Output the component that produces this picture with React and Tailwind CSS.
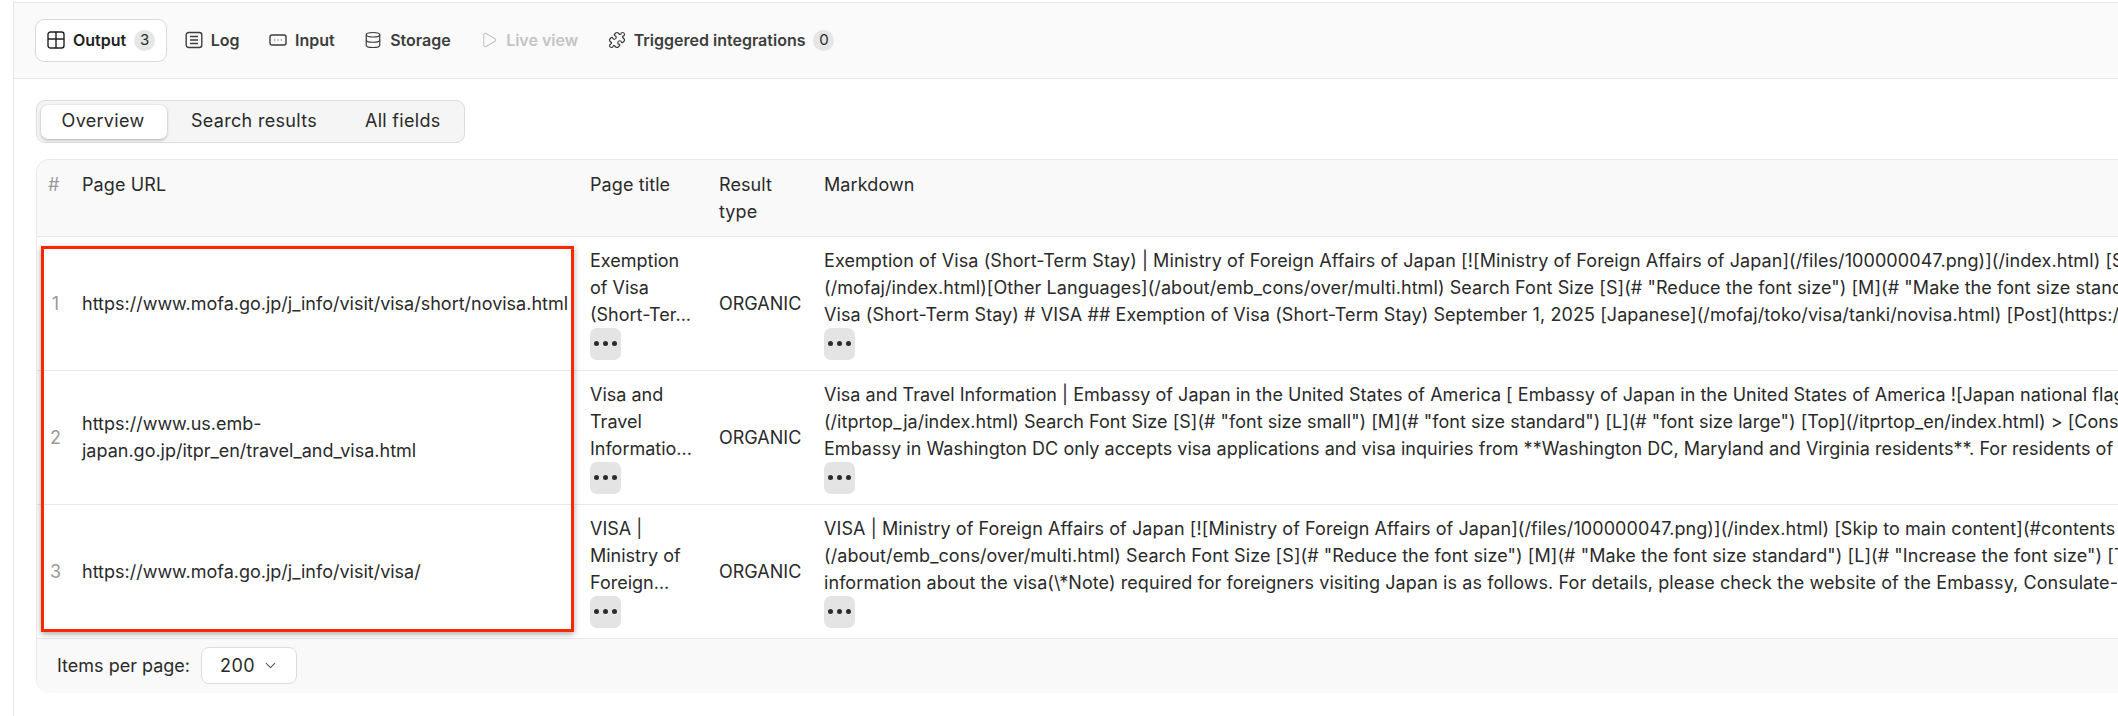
import React from 'react'
import { ChevronDown, Database, Play, Puzzle } from 'lucide-react'

const rows = [
    {
        id: 1,
        url: 'https://www.mofa.go.jp/j_info/visit/visa/short/novisa.html',
        title: ['Exemption', 'of Visa', '(Short-Ter...'],
        tracking: 'tracking-[0.08px]',
        markdown: [
            'Exemption of Visa (Short-Term Stay) | Ministry of Foreign Affairs of Japan [![Ministry of Foreign Affairs of Japan](/files/100000047.png)](/index.html) [Skip to main content](#contents',
            '(/mofaj/index.html)[Other Languages](/about/emb_cons/over/multi.html) Search Font Size [S](# "Reduce the font size") [M](# "Make the font size standard") [L]',
            'Visa (Short-Term Stay) # VISA ## Exemption of Visa (Short-Term Stay) September 1, 2025 [Japanese](/mofaj/toko/visa/tanki/novisa.html) [Post](https://twitter.com',
        ],
    },
    {
        id: 2,
        url: 'https://www.us.emb-japan.go.jp/itpr_en/travel_and_visa.html',
        title: ['Visa and', 'Travel', 'Informatio...'],
        tracking: 'tracking-[0.03px]',
        markdown: [
            'Visa and Travel Information | Embassy of Japan in the United States of America [ Embassy of Japan in the United States of America ![Japan national flag',
            '(/itprtop_ja/index.html) Search Font Size [S](# "font size small") [M](# "font size standard") [L](# "font size large") [Top](/itprtop_en/index.html) > [Consular',
            'Embassy in Washington DC only accepts visa applications and visa inquiries from **Washington DC, Maryland and Virginia residents**. For residents of other',
        ],
    },
    {
        id: 3,
        url: 'https://www.mofa.go.jp/j_info/visit/visa/',
        title: ['VISA |', 'Ministry of', 'Foreign...'],
        tracking: 'tracking-[0.08px]',
        markdown: [
            'VISA | Ministry of Foreign Affairs of Japan [![Ministry of Foreign Affairs of Japan](/files/100000047.png)](/index.html) [Skip to main content](#contents',
            '(/about/emb_cons/over/multi.html) Search Font Size [S](# "Reduce the font size") [M](# "Make the font size standard") [L](# "Increase the font size") [Top]',
            'information about the visa(\\*Note) required for foreigners visiting Japan is as follows. For details, please check the website of the Embassy, Consulate-General',
        ],
    },
]

function MoreButton() {
    return (
        <div className="flex h-[32px] w-[31px] items-center justify-center gap-[4px] rounded-[7px] bg-[#e4e4e4]">
            <span className="h-[5px] w-[5px] rounded-full bg-[#2b2b2b]" />
            <span className="h-[5px] w-[5px] rounded-full bg-[#2b2b2b]" />
            <span className="h-[5px] w-[5px] rounded-full bg-[#2b2b2b]" />
        </div>
    )
}

function GridIcon() {
    return (
        <svg width="18" height="18" viewBox="0 0 18 18" fill="none" stroke="currentColor" strokeWidth="1.4">
            <rect x="1" y="1" width="16" height="16" rx="2.5" />
            <path d="M1 8h16M9 1v16" />
        </svg>
    )
}

function LogIcon() {
    return (
        <svg width="18" height="18" viewBox="0 0 18 18" fill="none" stroke="currentColor" strokeWidth="1.4">
            <rect x="1.2" y="1.5" width="15.6" height="15" rx="2.5" />
            <path d="M5 5.5h8M5 9h8M5 12.5h8" />
        </svg>
    )
}

function InputIcon() {
    return (
        <svg width="18" height="18" viewBox="0 0 18 18" fill="none" stroke="currentColor" strokeWidth="1.4">
            <rect x="1" y="4" width="16" height="10" rx="2" />
            <path d="M5.5 9h.6M8.7 9h.6M11.9 9h.6" strokeWidth="1.5" />
        </svg>
    )
}

function Tab({ icon, label, count, active, disabled }) {
    return (
        <div
            className={`flex h-[43px] items-center gap-[8px] rounded-[9px] border px-[11px] text-[16px] font-semibold ${
                active ? 'border-[#d9d9d9] bg-white text-[#1f1f1f]' : 'border-transparent'
            } ${disabled ? 'text-[#c4c4c4]' : active ? '' : 'text-[#3d3d3d]'}`}
        >
            {icon}
            <span>{label}</span>
            {count !== undefined && (
                <span className="flex h-[21px] w-[21px] items-center justify-center rounded-full bg-[#e6e6e6] text-[15px] font-normal text-[#2b2b2b]">
                    {count}
                </span>
            )}
        </div>
    )
}

function App() {
    return (
        <div className="h-[716px] w-[2118px] overflow-hidden bg-white font-['Inter',sans-serif] text-[#2a2a2a]">
            <div className="ml-[13px] mt-[2px] h-[714px] border-l border-t border-[#e8e8e8]">
                {/* Tabs */}
                <div className="flex h-[76px] items-center gap-[5.5px] border-b border-[#e8e8e8] bg-[#fafafa] pl-[21px] pb-[1px]">
                    <Tab active icon={<GridIcon />} label="Output" count={3} />
                    <Tab icon={<LogIcon />} label="Log" />
                    <Tab icon={<InputIcon />} label="Input" />
                    <Tab icon={<Database size={18} strokeWidth={1.6} />} label="Storage" />
                    <Tab disabled icon={<Play size={18} strokeWidth={1.4} />} label="Live view" />
                    <Tab icon={<Puzzle size={18} strokeWidth={1.6} />} label="Triggered integrations" count={0} />
                </div>

                <div className="pl-[22px] pt-[21px]">
                    {/* View switcher */}
                    <div className="flex h-[43px] w-[429px] items-center rounded-[9px] border border-[#dcdcdc] bg-[#f5f5f5] pl-[4px] pb-[2px] text-[18px] tracking-[0.3px]">
                        <div className="mt-[2px] flex h-[34px] w-[126px] items-center justify-center rounded-[7px] bg-white pb-[2px] pr-[2px] shadow-[0_1px_3px_rgba(0,0,0,0.3)]">Overview</div>
                        <div className="ml-[24px]">Search results</div>
                        <div className="ml-[48px]">All fields</div>
                    </div>

                    {/* Results table */}
                    <div className="relative mt-[16px] overflow-hidden rounded-tl-[14px] rounded-bl-[14px] border-l border-t border-[#e8e8e8]">
                        <table className="w-[2600px] table-fixed border-collapse text-left text-[18px] leading-[27px]">
                            <colgroup>
                                <col className="w-[33px]" />
                                <col className="w-[508px]" />
                                <col className="w-[129px]" />
                                <col className="w-[105px]" />
                                <col />
                            </colgroup>
                            <thead>
                                <tr className="h-[76px] border-b border-[#e8e8e8] bg-[#f9f9f9] align-top tracking-[0.1px]">
                                    <th className="pl-[11px] pt-[11px] font-normal text-[#9a9a9a]">#</th>
                                    <th className="pl-[12px] pt-[11px] font-normal">Page URL</th>
                                    <th className="pl-[12px] pt-[11px] font-normal">Page title</th>
                                    <th className="pl-[12px] pt-[11px] font-normal">Result<br />type</th>
                                    <th className="pl-[12px] pt-[11px] font-normal">Markdown</th>
                                </tr>
                            </thead>
                            <tbody>
                                {rows.map((row) => (
                                    <tr key={row.id} className="h-[134px] border-b border-[#e8e8e8]">
                                        <td className="pl-[4px] text-center text-[#9a9a9a]">{row.id}</td>
                                        <td className="pl-[12px] pr-[4px]">{row.url}</td>
                                        <td className="pl-[12px]">
                                            {row.title.map((line) => <div key={line} className="whitespace-nowrap">{line}</div>)}
                                            <MoreButton />
                                        </td>
                                        <td className="pl-[12px]">ORGANIC</td>
                                        <td className={`pl-[12px] ${row.tracking}`}>
                                            {row.markdown.map((line) => <div key={line} className="whitespace-nowrap">{line}</div>)}
                                            <MoreButton />
                                        </td>
                                    </tr>
                                ))}
                            </tbody>
                        </table>

                        {/* Footer */}
                        <div className="flex h-[54px] items-center gap-[11px] bg-[#f9f9f9] pl-[20px] text-[18px]">
                            <span>Items per page:</span>
                            <div className="flex h-[37px] w-[96px] items-center gap-[7px] rounded-[8px] border border-[#dcdcdc] bg-white pl-[18px] text-[18px] tracking-[0.4px]">
                                200
                                <ChevronDown size={17} strokeWidth={1.5} className="text-[#555555]" />
                            </div>
                        </div>

                        {/* Annotation */}
                        <div className="absolute left-[4px] top-[86px] h-[386px] w-[533px] border-[3px] border-[#ff2600] shadow-[0_2px_6px_rgba(0,0,0,0.35)]" />
                    </div>
                </div>
            </div>
        </div>
    )
}

export default App
